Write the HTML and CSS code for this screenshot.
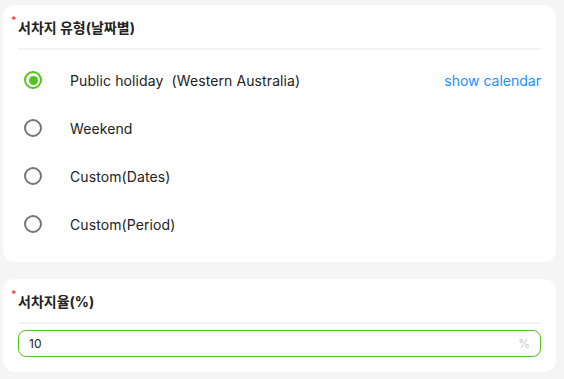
FILE: index.html
```html
<!DOCTYPE html>
<html lang="ko">
<head>
  <meta charset="UTF-8" />
  <title>서차지 설정</title>
  <link rel="stylesheet" href="styles.css">
</head>
<body>

  <section class="card">
    <h3 class="card-title"><span class="req">*</span>서차지 유형(날짜별)</h3>
    <div class="options">
      <label class="option">
        <span class="radio checked"></span>
        <span class="option-label">Public holiday&nbsp; (Western Australia)</span>
        <a class="link" href="#">show calendar</a>
      </label>
      <label class="option">
        <span class="radio"></span>
        <span class="option-label">Weekend</span>
      </label>
      <label class="option">
        <span class="radio"></span>
        <span class="option-label">Custom(Dates)</span>
      </label>
      <label class="option">
        <span class="radio"></span>
        <span class="option-label">Custom(Period)</span>
      </label>
    </div>
  </section>

  <section class="card card-rate">
    <h3 class="card-title"><span class="req">*</span>서차지율(%)</h3>
    <div class="input-box">
      <input type="text" value="10" />
      <span class="suffix">%</span>
    </div>
  </section>

</body>
</html>
```

FILE: styles.css
```css
body {
  font-family: Inter, "Noto Sans CJK KR", sans-serif;
  margin: 0;
  padding: 5px 8px 0 3px;
  background: #f5f5f5;
  color: #222;
}
.card {
  background: #fff;
  border-radius: 12px;
  padding: 0 15px 0 15px;
  height: 257px;
  box-sizing: border-box;
}
.card-rate {
  margin-top: 17px;
  height: 93px;
}
.card-title {
  margin: 0;
  padding: 13px 0 10px 0;
  font-size: 14px;
  font-weight: 700;
  line-height: 20px;
  border-bottom: 2px solid #f3f3f3;
  position: relative;
}
.req {
  position: absolute;
  left: -7px;
  top: 10px;
  color: #ff3b3b;
  font-size: 10px;
  line-height: 1;
  font-weight: 700;
}
.options {
  padding-top: 6px;
}
.option {
  display: flex;
  align-items: center;
  height: 48px;
  font-size: 14px;
  letter-spacing: 0.1px;
}
.radio {
  width: 18px;
  height: 18px;
  box-sizing: border-box;
  border: 2px solid #777;
  border-radius: 50%;
  margin-left: 6px;
  margin-right: 28px;
  display: flex;
  justify-content: center;
  align-items: center;
}
.radio.checked {
  border-color: #52c41a;
}
.radio.checked::after {
  content: "";
  width: 9px;
  height: 9px;
  border-radius: 50%;
  background: #52c41a;
}
.option-label {
  flex: 1;
  color: #222;
}
.link {
  color: #1890ff;
  text-decoration: none;
  font-size: 14px;
  letter-spacing: 0;
}
.input-box {
  margin-top: 6px;
  display: flex;
  align-items: center;
  height: 27px;
  box-sizing: border-box;
  border: 1.5px solid #52c41a;
  border-radius: 8px;
  padding: 0 10px;
}
.input-box input {
  flex: 1;
  border: none;
  outline: none;
  font-family: inherit;
  font-size: 12px;
  color: #222;
  padding: 0;
  background: transparent;
}
.suffix {
  color: #c8c8c8;
  font-size: 12px;
}
```
